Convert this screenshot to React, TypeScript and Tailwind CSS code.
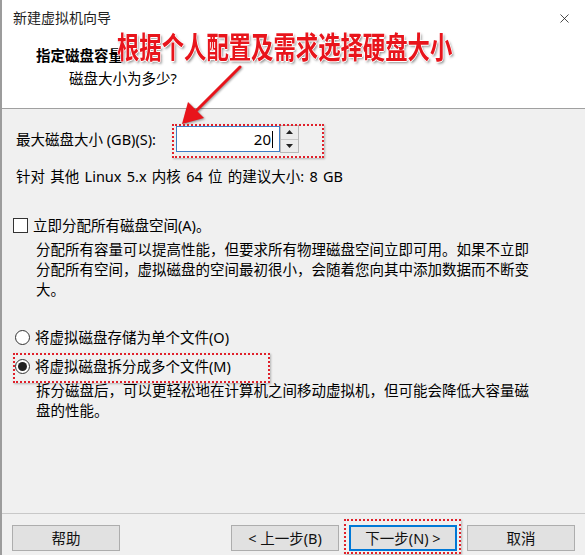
import { X } from "lucide-react";

const font = "font-['Noto_Sans','Noto_Sans_CJK_SC',sans-serif]";

const Radio = ({ checked }: { checked?: boolean }) => (
  <span className="w-[15px] h-[15px] rounded-full border border-[#333] bg-white flex items-center justify-center shrink-0">
    {checked && <span className="w-[9px] h-[9px] rounded-full bg-[#222]" />}
  </span>
);

const Button = ({ label, primary }: { label: string; primary?: boolean }) => (
  <button
    className={`w-[108px] h-[26px] bg-[#e1e1e1] text-[14.5px] text-[#111] leading-none ${
      primary ? "border-2 border-[#0078d7]" : "border border-[#adadad]"
    }`}
  >
    {label}
  </button>
);

const App = () => {
  return (
    <div className={`relative w-[585px] h-[555px] flex flex-col bg-[#f0f0f0] border-l-2 border-[#9c9c9c] text-[#000] ${font}`}>
      {/* header */}
      <div className="h-[109px] bg-white border-b border-[#a0a0a0] shrink-0">
        <div className="flex items-center justify-between pt-[9px] pl-[11px] pr-[13px] h-[27px]">
          <span className="text-[14px] leading-[18px] text-[#222]">新建虚拟机向导</span>
          <X size={15} strokeWidth={1.3} className="text-[#222]" />
        </div>
        <div className="mt-[19px] pl-[34px] text-[14.5px] leading-[18px] font-bold">指定磁盘容量</div>
        <div className="mt-[5px] pl-[67px] text-[14.5px] leading-[18px]">磁盘大小为多少?</div>
      </div>

      {/* body */}
      <div className="flex-1 pl-[11px] text-[14.5px]">
        <div className="mt-[17px] flex items-center h-[26px]">
          <span className="w-[163px] pl-[3px] leading-[20px]">最大磁盘大小 (GB)(S):</span>
          <div className="w-[104px] h-[26px] bg-white border border-[#3d7cc4] flex items-center justify-end pr-[6px] text-[15px]">
            20<span className="ml-[1px] w-[1px] h-[17px] bg-black" />
          </div>
          <div className="w-[19px] h-[28px] flex flex-col border border-[#b8b8b8] bg-[#ececec]">
            <div className="flex-1 flex items-center justify-center border-b border-[#c8c8c8]">
              <svg width="7" height="4" viewBox="0 0 7 4"><path d="M0 4 L3.5 0 L7 4 Z" fill="#222" /></svg>
            </div>
            <div className="flex-1 flex items-center justify-center">
              <svg width="7" height="4" viewBox="0 0 7 4"><path d="M0 0 L3.5 4 L7 0 Z" fill="#222" /></svg>
            </div>
          </div>
        </div>
        <div className="mt-[14px] pl-[3px] leading-[20px] [word-spacing:1.5px]">针对 其他 Linux 5.x 内核 64 位 的建议大小: 8 GB</div>

        <div className="mt-[29px] flex items-center gap-[5px] h-[20px]">
          <span className="w-[15px] h-[15px] border border-[#333] bg-white shrink-0" />
          <span className="leading-[20px]">立即分配所有磁盘空间(A)。</span>
        </div>
        <p className="mt-[4px] pl-[23px] leading-[20px]">
          分配所有容量可以提高性能，但要求所有物理磁盘空间立即可用。如果不立即
          <br />
          分配所有空间，虚拟磁盘的空间最初很小，会随着您向其中添加数据而不断变
          <br />
          大。
        </p>

        <div className="mt-[28px] flex items-center gap-[5px] h-[20px] pl-[2px]">
          <Radio />
          <span className="leading-[20px]">将虚拟磁盘存储为单个文件(O)</span>
        </div>
        <div className="mt-[9px] flex items-center gap-[5px] h-[20px] pl-[2px]">
          <Radio checked />
          <span className="leading-[20px]">将虚拟磁盘拆分成多个文件(M)</span>
        </div>
        <p className="mt-[4px] pl-[23px] leading-[20px]">
          拆分磁盘后，可以更轻松地在计算机之间移动虚拟机，但可能会降低大容量磁
          <br />
          盘的性能。
        </p>
      </div>

      {/* footer */}
      <div className="h-[42px] shrink-0 border-t border-[#c8c8c8] pt-[11px] pl-[10px] pr-[10px] flex items-start">
        <Button label="帮助" />
        <div className="flex-1" />
        <div className="flex gap-[10px]">
          <Button label="< 上一步(B)" />
          <Button label="下一步(N) >" primary />
          <Button label="取消" />
        </div>
      </div>

      {/* annotations */}
      <div className="absolute left-[115px] top-[30px] origin-left scale-x-[0.745] whitespace-nowrap text-[30px] leading-[34px] font-bold text-[#e8141b] [text-shadow:1px_0_0_#fff,-1px_0_0_#fff,0_1px_0_#fff,0_-1px_0_#fff,2px_2px_3px_rgba(0,0,0,0.45)]">
        根据个人配置及需求选择硬盘大小
      </div>
      <svg className="absolute left-[170px] top-[60px] [filter:drop-shadow(1px_1px_1px_rgba(0,0,0,0.4))]" width="80" height="70" viewBox="0 0 80 70">
        <line x1="68" y1="7" x2="22" y2="53" stroke="#e8141b" strokeWidth="3" strokeLinecap="round" />
        <path d="M10 64 L16 42 L32 58 Z" fill="#e8141b" />
      </svg>
      <div className="absolute left-[170px] top-[124px] w-[152px] h-[34px] border-2 border-dotted border-[#e0202a] [box-shadow:1px_1px_2px_rgba(0,0,0,0.25)]" />
      <div className="absolute left-[11px] top-[353px] w-[257px] h-[30px] border-2 border-dotted border-[#e0202a] [box-shadow:1px_1px_2px_rgba(0,0,0,0.25)]" />
      <div className="absolute left-[342px] top-[519px] w-[117px] h-[35px] border-2 border-dotted border-[#e0202a] [box-shadow:1px_1px_2px_rgba(0,0,0,0.25)]" />
    </div>
  );
};

export default App;
